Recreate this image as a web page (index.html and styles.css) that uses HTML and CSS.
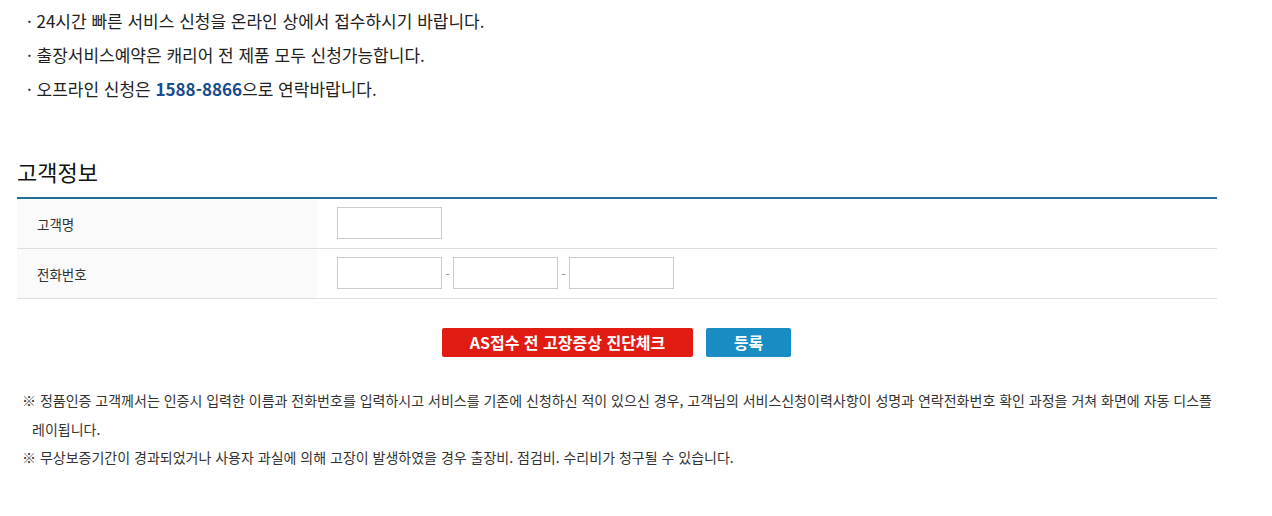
FILE: index.html
```html
<!DOCTYPE html>
<html lang="ko">
<head>
<meta charset="utf-8">
<title>고객정보</title>
<link rel="stylesheet" href="styles.css">
</head>
<body>
<div class="page">
  <ul class="guide">
    <li>· 24시간 빠른 서비스 신청을 온라인 상에서 접수하시기 바랍니다.</li>
    <li>· 출장서비스예약은 캐리어 전 제품 모두 신청가능합니다.</li>
    <li>· 오프라인 신청은 <strong class="tel">1588-8866</strong>으로 연락바랍니다.</li>
  </ul>

  <h2 class="title">고객정보</h2>

  <div class="form-table">
    <div class="row">
      <div class="label">고객명</div>
      <div class="field"><input class="inp" type="text"></div>
    </div>
    <div class="row">
      <div class="label">전화번호</div>
      <div class="field">
        <input class="inp" type="text"><span class="dash">-</span><input class="inp" type="text"><span class="dash">-</span><input class="inp" type="text">
      </div>
    </div>
  </div>

  <div class="buttons">
    <button class="btn btn-red" type="button">AS접수 전 고장증상 진단체크</button>
    <button class="btn btn-blue" type="button">등록</button>
  </div>

  <div class="notes">
    <p class="note">※ 정품인증 고객께서는 인증시 입력한 이름과 전화번호를 입력하시고 서비스를 기존에 신청하신 적이 있으신 경우, 고객님의 서비스신청이력사항이 성명과 연락전화번호 확인 과정을 거쳐 화면에 자동 디스플레이됩니다.</p>
    <p class="note">※ 무상보증기간이 경과되었거나 사용자 과실에 의해 고장이 발생하였을 경우 출장비. 점검비. 수리비가 청구될 수 있습니다.</p>
  </div>
</div>
</body>
</html>
```

FILE: styles.css
```css
* { box-sizing: border-box; }
html, body {
  margin: 0;
  padding: 0;
  background: #fff;
}
body {
  font-family: "Noto Sans CJK KR", "Noto Sans", sans-serif;
  color: #222;
}
.page {
  width: 1200px;
  margin-left: 17px;
  padding-top: 4px;
}
.guide {
  list-style: none;
  margin: 0;
  padding: 0 0 0 10px;
  font-size: 17px;
  line-height: 34px;
  color: #222;
}
.guide li { margin: 0; }
.tel {
  color: #164a8e;
  font-weight: bold;
}
.title {
  margin: 50px 0 11px;
  font-size: 22px;
  line-height: 30px;
  font-weight: normal;
  color: #111;
}
.form-table {
  border-top: 2px solid #1f6f94;
}
.row {
  display: flex;
  height: 50px;
  border-bottom: 1px solid #ddd;
}
.label {
  width: 300px;
  background: #fafafa;
  padding-left: 20px;
  display: flex;
  align-items: center;
  font-size: 13.5px;
  color: #333;
}
.field {
  display: flex;
  align-items: center;
  padding-left: 20px;
  padding-bottom: 1px;
}
.inp {
  width: 105px;
  height: 32px;
  border: 1px solid #ccc;
  margin: 0;
  padding: 0 6px;
  font: inherit;
  background: #fff;
}
.dash {
  width: 11px;
  text-align: center;
  font-size: 12px;
  color: #888;
}
.buttons {
  display: flex;
  justify-content: center;
  gap: 13px;
  margin-top: 29px;
  padding-right: 1px;
}
.btn {
  height: 29px;
  border: 0;
  border-radius: 2px;
  padding: 0;
  font-family: "Noto Sans CJK KR", sans-serif;
  font-size: 16px;
  font-weight: bold;
  color: #fff;
  line-height: 29px;
  cursor: pointer;
}
.btn-red {
  background: #e21b12;
  width: 251px;
}
.btn-blue {
  background: #1a8cc4;
  width: 85px;
}
.notes {
  margin-top: 29px;
  padding-left: 15px;
  font-size: 14px;
  line-height: 28.5px;
  color: #333;
}
.note {
  margin: 0;
  text-indent: -10px;
}
```
